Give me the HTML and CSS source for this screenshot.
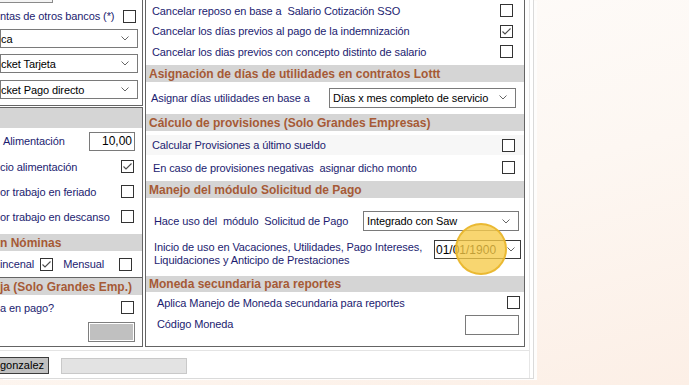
FILE: index.html
```html
<!DOCTYPE html>
<html lang="es">
<head>
    <meta charset="UTF-8">
    <meta name="viewport" content="width=device-width, initial-scale=1.0">
    <title>Parámetros de nómina</title>
    <link rel="stylesheet" href="styles.css">
</head>
<body>
    <div class="window">
        <div class="client">
            <div class="panels">
                <!-- columna izquierda (recortada) -->
                <div class="col-left">
                    <div class="group group-a">
                        <div class="stub"></div>
                        <div class="row row-bancos">
                            <span class="lbl">ntas de otros bancos (*)</span>
                            <span class="chk"></span>
                        </div>
                        <div class="combo combo-left first">
                            <span>ca</span>
                            <svg class="chev" width="8" height="5" viewBox="0 0 8 5"><path d="M0.5 0.5 L4 4 L7.5 0.5"/></svg>
                        </div>
                        <div class="combo combo-left">
                            <span>cket Tarjeta</span>
                            <svg class="chev" width="8" height="5" viewBox="0 0 8 5"><path d="M0.5 0.5 L4 4 L7.5 0.5"/></svg>
                        </div>
                        <div class="combo combo-left third">
                            <span>cket Pago directo</span>
                            <svg class="chev" width="8" height="5" viewBox="0 0 8 5"><path d="M0.5 0.5 L4 4 L7.5 0.5"/></svg>
                        </div>
                    </div>

                    <div class="group group-b">
                        <div class="head head-tall"></div>
                        <div class="row row-alim">
                            <span class="lbl">&nbsp;Alimentación</span>
                            <span class="field num">10,00</span>
                        </div>
                        <div class="row row-l">
                            <span class="lbl">cio alimentación</span>
                            <span class="chk"><svg width="11" height="11" viewBox="0 0 11 11"><path d="M1.5 5.5 L4 8 L9.5 2.5"/></svg></span>
                        </div>
                        <div class="row row-l">
                            <span class="lbl">or trabajo en feriado</span>
                            <span class="chk"></span>
                        </div>
                        <div class="row row-l">
                            <span class="lbl">or trabajo en descanso</span>
                            <span class="chk"></span>
                        </div>
                        <div class="head head-nom">n Nóminas</div>
                        <div class="row row-quin">
                            <span class="lbl">incenal</span>
                            <span class="chk chk-quin"><svg width="11" height="11" viewBox="0 0 11 11"><path d="M1.5 5.5 L4 8 L9.5 2.5"/></svg></span>
                            <span class="lbl mensual">Mensual</span>
                            <span class="chk"></span>
                        </div>
                    </div>

                    <div class="group group-c">
                        <div class="head">ja (Solo Grandes Emp.)</div>
                        <div class="row row-pago">
                            <span class="lbl">a en pago?</span>
                            <span class="chk"></span>
                        </div>
                        <div class="graybox"></div>
                    </div>
                </div>

                <!-- columna derecha -->
                <div class="col-right">
                    <div class="row r-top r1">
                        <span class="lbl">Cancelar reposo en base a&nbsp; Salario Cotización SSO</span>
                        <span class="chk"></span>
                    </div>
                    <div class="row r-top r2">
                        <span class="lbl">Cancelar los días previos al pago de la indemnización</span>
                        <span class="chk"><svg width="11" height="11" viewBox="0 0 11 11"><path d="M1.5 5.5 L4 8 L9.5 2.5"/></svg></span>
                    </div>
                    <div class="row r-top r3">
                        <span class="lbl">Cancelar los dias previos con concepto distinto de salario</span>
                        <span class="chk"></span>
                    </div>

                    <div class="head head-r h1">Asignación de días de utilidades en contratos Lottt</div>
                    <div class="row r-asig">
                        <span class="lbl">Asignar días utilidades en base a</span>
                        <div class="combo combo-asig">
                            <span>Días x mes completo de servicio</span>
                            <svg class="chev" width="8" height="5" viewBox="0 0 8 5"><path d="M0.5 0.5 L4 4 L7.5 0.5"/></svg>
                        </div>
                    </div>

                    <div class="head head-r h2">Cálculo de provisiones (Solo Grandes Empresas)</div>
                    <div class="row r-prov r-calc">
                        <span class="lbl">Calcular Provisiones a último sueldo</span>
                        <span class="chk"></span>
                    </div>
                    <div class="row r-prov r-neg">
                        <span class="lbl">En caso de provisiones negativas&nbsp; asignar dicho monto</span>
                        <span class="chk"></span>
                    </div>

                    <div class="head head-r h3">Manejo del módulo Solicitud de Pago</div>
                    <div class="row r-uso">
                        <span class="lbl">Hace uso del&nbsp; módulo&nbsp; Solicitud de Pago</span>
                        <div class="combo combo-uso">
                            <span>Integrado con Saw</span>
                            <svg class="chev" width="8" height="5" viewBox="0 0 8 5"><path d="M0.5 0.5 L4 4 L7.5 0.5"/></svg>
                        </div>
                    </div>
                    <div class="row r-inicio">
                        <span class="lbl two-lines">Inicio de uso en Vacaciones, Utilidades, Pago Intereses,<br>Liquidaciones y Anticipo de Prestaciones</span>
                        <div class="combo combo-date">
                            <span>01/01/1900</span>
                            <svg class="chev" width="8" height="5" viewBox="0 0 8 5"><path d="M0.5 0.5 L4 4 L7.5 0.5"/></svg>
                        </div>
                    </div>

                    <div class="head head-r h4">Moneda secundaria para reportes</div>
                    <div class="row r-moneda">
                        <span class="lbl">Aplica Manejo de Moneda secundaria para reportes</span>
                        <span class="chk"></span>
                    </div>
                    <div class="row r-codigo">
                        <span class="lbl">Código Moneda</span>
                        <span class="field field-cod"></span>
                    </div>
                </div>
            </div>

            <div class="statusbar">
                <div class="user-btn">gonzalez</div>
                <div class="status-field"></div>
            </div>
        </div>
    </div>

    <div class="cursor-hl"></div>
</body>
</html>
```

FILE: styles.css
```css
html, body {
    margin: 0;
    padding: 0;
}

body {
    position: relative;
    width: 689px;
    height: 385px;
    overflow: hidden;
    background: linear-gradient(165deg, #fefdfc 0%, #fdf7f2 55%, #fcefe6 100%);
    font-family: "Liberation Sans", Arial, sans-serif;
    font-size: 11px;
    letter-spacing: -0.1px;
    color: #1c1c70;
}

.window {
    width: 533px;
    height: 378px;
    background: #ffffff;
    border-right: 1px solid #dadada;
    border-bottom: 1px solid #dadada;
    box-shadow: 3px 1px 0 #fefdfc;
}

.client {
    width: 529px;
    height: 378px;
    border-right: 1px solid #e6e6e6;
    display: flex;
    flex-direction: column;
}

.panels {
    display: flex;
    gap: 2px;
    height: 347px;
}

/* ---- controles comunes ---- */

.row {
    display: flex;
    align-items: center;
    box-sizing: border-box;
}

.lbl {
    white-space: nowrap;
}

.chk {
    width: 13px;
    height: 13px;
    box-sizing: border-box;
    border: 1px solid #333333;
    background: #ffffff;
    flex: none;
    margin-left: auto;
    display: flex;
    align-items: center;
    justify-content: center;
}

.chk svg path {
    fill: none;
    stroke: #4a4a4a;
    stroke-width: 1.1;
}

.combo {
    height: 19px;
    box-sizing: border-box;
    border: 1px solid #7a7a7a;
    background: #ffffff;
    color: #000000;
    display: flex;
    align-items: center;
    justify-content: space-between;
    padding: 0 8px 0 3px;
    white-space: nowrap;
    flex: none;
}

.chev path {
    fill: none;
    stroke: #666666;
    stroke-width: 1;
}

.field {
    height: 20px;
    box-sizing: border-box;
    border: 1px solid #7a7a7a;
    background: #ffffff;
    color: #000000;
    flex: none;
    margin-left: auto;
}

.head {
    height: 17px;
    background: #d5d5d5;
    color: #a65a36;
    font-weight: bold;
    font-size: 12px;
    letter-spacing: 0;
    display: flex;
    align-items: center;
    white-space: nowrap;
}

/* ---- columna izquierda ---- */

.col-left {
    width: 143px;
    display: flex;
    flex-direction: column;
}

.group {
    box-sizing: border-box;
    border: 1px solid #646464;
    border-left: none;
    background: #ffffff;
}

.group-a {
    height: 106px;
    border-top: none;
    margin-bottom: 1px;
}

.stub {
    width: 53px;
    height: 3px;
    box-sizing: border-box;
    background: #f4f4f4;
    border-right: 1px solid #8a8a8a;
    border-bottom: 1px solid #8a8a8a;
}

.row-bancos {
    height: 26px;
    padding-right: 6px;
}

.combo-left {
    margin-right: 4px;
    padding-left: 0;
}

.combo-left + .combo-left {
    margin-top: 6px;
}

.combo-left.third {
    margin-top: 7px;
}

.group-b {
    height: 171px;
}

.head-tall {
    height: 20px;
}

.row-alim {
    height: 26px;
    padding-right: 7px;
}

.num {
    width: 46px;
    height: 19px;
    text-align: right;
    padding-right: 2px;
    line-height: 17px;
    font-size: 12px;
    letter-spacing: 0;
}

.row-l {
    height: 25px;
    padding-right: 8px;
}

.head-nom {
    margin-top: 5px;
}

.row-quin {
    height: 26px;
    padding-right: 10px;
}

.row-quin .chk-quin {
    margin-left: 6px;
}

.mensual {
    margin-left: 10px;
}

.group-c {
    height: 69px;
    border-top: none;
}

.row-pago {
    height: 25px;
    padding-right: 8px;
}

.graybox {
    width: 47px;
    height: 20px;
    box-sizing: border-box;
    margin: 2px 7px 0 auto;
    background: #c0c0c0;
    border: 1px solid #7e7e7e;
    box-shadow: inset 0 0 0 1px #ffffff;
}

/* ---- columna derecha ---- */

.col-right {
    width: 380px;
    box-sizing: border-box;
    border: 1px solid #646464;
    border-top: none;
    background: #ffffff;
}

.r-top {
    padding: 0 11px 0 6px;
}

.r1 { height: 21px; }
.r2 { height: 20px; }
.r3 { height: 21px; }

.head-r {
    padding-left: 3px;
}

.h1 { margin-top: 3px; }
.h2 { margin-top: 1px; }
.h3 { margin-top: 1px; }
.h4 { height: 16px; }

.r-asig {
    height: 31px;
    padding: 0 8px 0 5px;
}

.combo-asig {
    width: 187px;
    height: 20px;
    margin-left: auto;
}

.r-prov {
    padding: 0 9px 0 6px;
}

.r-calc {
    height: 20px;
    margin-top: 4px;
    background: #f7f7f7;
}

.r-neg {
    height: 25px;
    padding-left: 7px;
}

.r-uso {
    height: 33px;
    padding: 13px 5px 0 8px;
}

.combo-uso {
    width: 156px;
    height: 20px;
    margin-left: auto;
}

.r-inicio {
    height: 36px;
    margin-top: 9px;
    align-items: flex-start;
    padding: 0 3px 0 8px;
}

.two-lines {
    line-height: 13px;
    padding-top: 1px;
}

.combo-date {
    width: 87px;
    margin-left: auto;
    border-color: #3a3a3a;
    padding: 0 5px 0 1px;
    font-size: 12px;
    letter-spacing: 0;
}

.r-moneda {
    height: 21px;
    padding: 0 4px 0 11px;
}

.r-codigo {
    height: 22px;
    padding: 0 5px 0 11px;
}

.field-cod {
    width: 54px;
    margin-top: 1px;
}

/* ---- barra inferior ---- */

.statusbar {
    margin-top: 3px;
    border-top: 1px solid #e4e4e4;
    padding-top: 6px;
    display: flex;
    align-items: flex-start;
    gap: 12px;
}

.user-btn {
    width: 49px;
    height: 17px;
    box-sizing: border-box;
    background: #c0c0c0;
    border: 1px solid #3c3c3c;
    border-left: none;
    color: #000000;
    line-height: 15px;
    letter-spacing: 0;
}

.status-field {
    width: 126px;
    height: 16px;
    margin-top: 1px;
    box-sizing: border-box;
    background: #e3e3e3;
    border: 1px solid #c9c9c9;
}

/* resaltado del puntero */
.cursor-hl {
    position: absolute;
    left: 455px;
    top: 223px;
    width: 52px;
    height: 52px;
    box-sizing: border-box;
    border-radius: 50%;
    background: rgba(246, 203, 72, 0.78);
    border: 2px solid rgba(232, 180, 40, 0.85);
}
```
